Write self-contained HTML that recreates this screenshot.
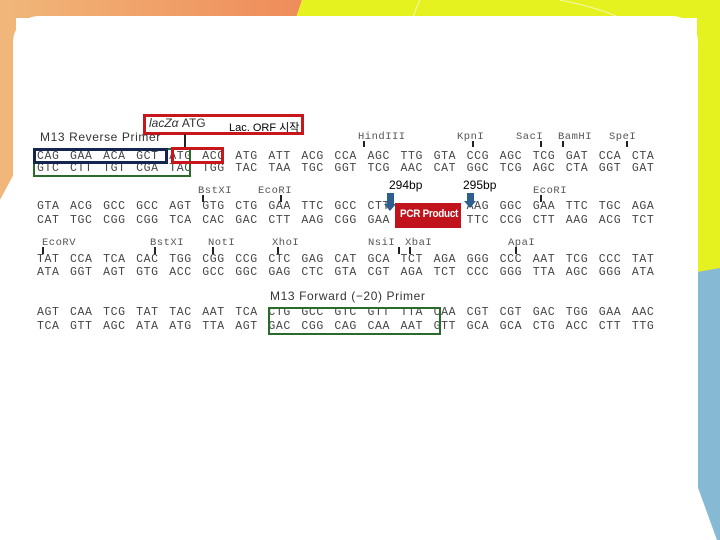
<!DOCTYPE html>
<html style="width:720px;height:540px;overflow:hidden"><head><meta charset="utf-8"><style>
*{margin:0;padding:0;box-sizing:border-box}
body{width:720px;height:540px;position:relative;overflow:hidden;background:#fff;font-family:"Liberation Sans","Noto Sans CJK KR",sans-serif}
.abs{position:absolute}
.row{position:absolute;left:37px;white-space:nowrap;font-family:"Liberation Mono",monospace;font-size:11.5px;color:#444;line-height:12px;letter-spacing:0.6px}
.row span{display:inline-block;width:33.05px}
.lab{position:absolute;font-family:"Liberation Mono",monospace;font-size:10.5px;color:#555;line-height:11px;letter-spacing:0.5px}
.tick{position:absolute;width:2px;height:9px;background:#222}
.sans{position:absolute;font-family:"Liberation Sans",sans-serif;font-size:12px;color:#333;letter-spacing:0.6px}
</style></head><body>
<svg class="abs" style="left:0;top:0" width="720" height="540">
<defs><linearGradient id="o" x1="0" x2="1" y1="0" y2="0"><stop offset="0" stop-color="#f1b77a"/><stop offset="1" stop-color="#ee8c5a"/></linearGradient></defs>
<polygon points="0,0 302,0 296,18 16,18 16,170 0,200" fill="url(#o)"/>
<polygon points="302,0 720,0 720,272 697,272 697,18 296,18" fill="#e6f21f"/>
<polygon points="697,272 720,268 720,540 717,540 697,485" fill="#86b9d3"/>
<path d="M420,0 Q415,10 413,18 M560,0 Q600,8 620,18" stroke="#f4f8b0" stroke-width="1" fill="none"/>
</svg>
<div class="abs" style="left:13px;top:16px;width:685px;height:525px;background:#fff;border-radius:26px 26px 0 0"></div>

<div class="abs" style="left:143px;top:114px;width:161px;height:21px;border:3px solid #c8161d"></div>
<div class="abs" style="left:149px;top:116px;font-size:12px;color:#333;font-style:italic">lacZα <span style="font-style:normal">ATG</span></div>
<div class="abs" style="left:229px;top:119px;font-size:11px;color:#000">Lac. ORF 시작</div>
<div class="sans" style="left:40px;top:130px">M13 Reverse Primer</div>
<div class="tick" style="left:184px;top:134px;height:15px"></div>

<div class="lab" style="left:358px;top:132px">HindIII</div><div class="tick" style="left:363px;top:141px;height:6px"></div>
<div class="lab" style="left:457px;top:132px">KpnI</div><div class="tick" style="left:472px;top:141px;height:6px"></div>
<div class="lab" style="left:516px;top:132px">SacI</div><div class="tick" style="left:540px;top:141px;height:6px"></div>
<div class="lab" style="left:558px;top:132px">BamHI</div><div class="tick" style="left:562px;top:141px;height:6px"></div>
<div class="lab" style="left:609px;top:132px">SpeI</div><div class="tick" style="left:626px;top:141px;height:6px"></div>

<div class="row" style="top:151px"><span>CAG</span><span>GAA</span><span>ACA</span><span>GCT</span><span>ATG</span><span>ACC</span><span>ATG</span><span>ATT</span><span>ACG</span><span>CCA</span><span>AGC</span><span>TTG</span><span>GTA</span><span>CCG</span><span>AGC</span><span>TCG</span><span>GAT</span><span>CCA</span><span>CTA</span></div>
<div class="row" style="top:163px"><span>GTC</span><span>CTT</span><span>TGT</span><span>CGA</span><span>TAC</span><span>TGG</span><span>TAC</span><span>TAA</span><span>TGC</span><span>GGT</span><span>TCG</span><span>AAC</span><span>CAT</span><span>GGC</span><span>TCG</span><span>AGC</span><span>CTA</span><span>GGT</span><span>GAT</span></div>
<div class="abs" style="left:33px;top:148px;width:158px;height:29px;border:2px solid #2a6a2a"></div>
<div class="abs" style="left:33px;top:148px;width:135px;height:16px;border:3px solid #14254f"></div>
<div class="abs" style="left:171px;top:147px;width:53px;height:17px;border:3px solid #c8161d"></div>

<div class="lab" style="left:198px;top:186px">BstXI</div><div class="tick" style="left:202px;top:195px;height:7px"></div>
<div class="lab" style="left:258px;top:186px">EcoRI</div><div class="tick" style="left:280px;top:195px;height:7px"></div>
<div class="lab" style="left:533px;top:186px">EcoRI</div><div class="tick" style="left:540px;top:195px;height:7px"></div>
<div class="abs" style="left:389px;top:178px;font-size:12px;color:#000">294bp</div>
<div class="abs" style="left:463px;top:178px;font-size:12px;color:#000">295bp</div>

<div class="row" style="top:201px"><span>GTA</span><span>ACG</span><span>GCC</span><span>GCC</span><span>AGT</span><span>GTG</span><span>CTG</span><span>GAA</span><span>TTC</span><span>GCC</span><span>CTT</span><span></span><span></span><span>AAG</span><span>GGC</span><span>GAA</span><span>TTC</span><span>TGC</span><span>AGA</span></div>
<div class="row" style="top:215px"><span>CAT</span><span>TGC</span><span>CGG</span><span>CGG</span><span>TCA</span><span>CAC</span><span>GAC</span><span>CTT</span><span>AAG</span><span>CGG</span><span>GAA</span><span></span><span></span><span>TTC</span><span>CCG</span><span>CTT</span><span>AAG</span><span>ACG</span><span>TCT</span></div>
<div class="abs" style="left:395px;top:203px;width:66px;height:25px;background:#c0131b"></div>
<div class="abs" style="left:400px;top:208px;font-size:11px;font-weight:bold;color:#fff;letter-spacing:-0.3px;transform:scaleX(0.9);transform-origin:left">PCR Product</div>
<div class="abs" style="left:387px;top:193px;width:7px;height:12px;background:#2e5f8f"></div>
<div class="abs" style="left:384px;top:204px;width:0;height:0;border-left:6px solid transparent;border-right:6px solid transparent;border-top:7px solid #2e5f8f"></div>
<div class="abs" style="left:467px;top:193px;width:7px;height:9px;background:#2e5f8f"></div>
<div class="abs" style="left:464px;top:201px;width:0;height:0;border-left:6px solid transparent;border-right:6px solid transparent;border-top:7px solid #2e5f8f"></div>

<div class="lab" style="left:42px;top:238px">EcoRV</div><div class="tick" style="left:42px;top:247px;height:7px"></div>
<div class="lab" style="left:150px;top:238px">BstXI</div><div class="tick" style="left:154px;top:247px;height:7px"></div>
<div class="lab" style="left:208px;top:238px">NotI</div><div class="tick" style="left:212px;top:247px;height:7px"></div>
<div class="lab" style="left:272px;top:238px">XhoI</div><div class="tick" style="left:277px;top:247px;height:7px"></div>
<div class="lab" style="left:368px;top:238px">NsiI</div><div class="tick" style="left:398px;top:247px;height:7px"></div>
<div class="lab" style="left:405px;top:238px">XbaI</div><div class="tick" style="left:409px;top:247px;height:7px"></div>
<div class="lab" style="left:508px;top:238px">ApaI</div><div class="tick" style="left:515px;top:247px;height:7px"></div>

<div class="row" style="top:254px"><span>TAT</span><span>CCA</span><span>TCA</span><span>CAC</span><span>TGG</span><span>CGG</span><span>CCG</span><span>CTC</span><span>GAG</span><span>CAT</span><span>GCA</span><span>TCT</span><span>AGA</span><span>GGG</span><span>CCC</span><span>AAT</span><span>TCG</span><span>CCC</span><span>TAT</span></div>
<div class="row" style="top:267px"><span>ATA</span><span>GGT</span><span>AGT</span><span>GTG</span><span>ACC</span><span>GCC</span><span>GGC</span><span>GAG</span><span>CTC</span><span>GTA</span><span>CGT</span><span>AGA</span><span>TCT</span><span>CCC</span><span>GGG</span><span>TTA</span><span>AGC</span><span>GGG</span><span>ATA</span></div>

<div class="sans" style="left:270px;top:289px">M13 Forward (−20) Primer</div>
<div class="row" style="top:307px"><span>AGT</span><span>CAA</span><span>TCG</span><span>TAT</span><span>TAC</span><span>AAT</span><span>TCA</span><span>CTG</span><span>GCC</span><span>GTC</span><span>GTT</span><span>TTA</span><span>CAA</span><span>CGT</span><span>CGT</span><span>GAC</span><span>TGG</span><span>GAA</span><span>AAC</span></div>
<div class="row" style="top:321px"><span>TCA</span><span>GTT</span><span>AGC</span><span>ATA</span><span>ATG</span><span>TTA</span><span>AGT</span><span>GAC</span><span>CGG</span><span>CAG</span><span>CAA</span><span>AAT</span><span>GTT</span><span>GCA</span><span>GCA</span><span>CTG</span><span>ACC</span><span>CTT</span><span>TTG</span></div>
<div class="abs" style="left:268px;top:307px;width:173px;height:28px;border:2px solid #2a6a2a"></div>
</body></html>
